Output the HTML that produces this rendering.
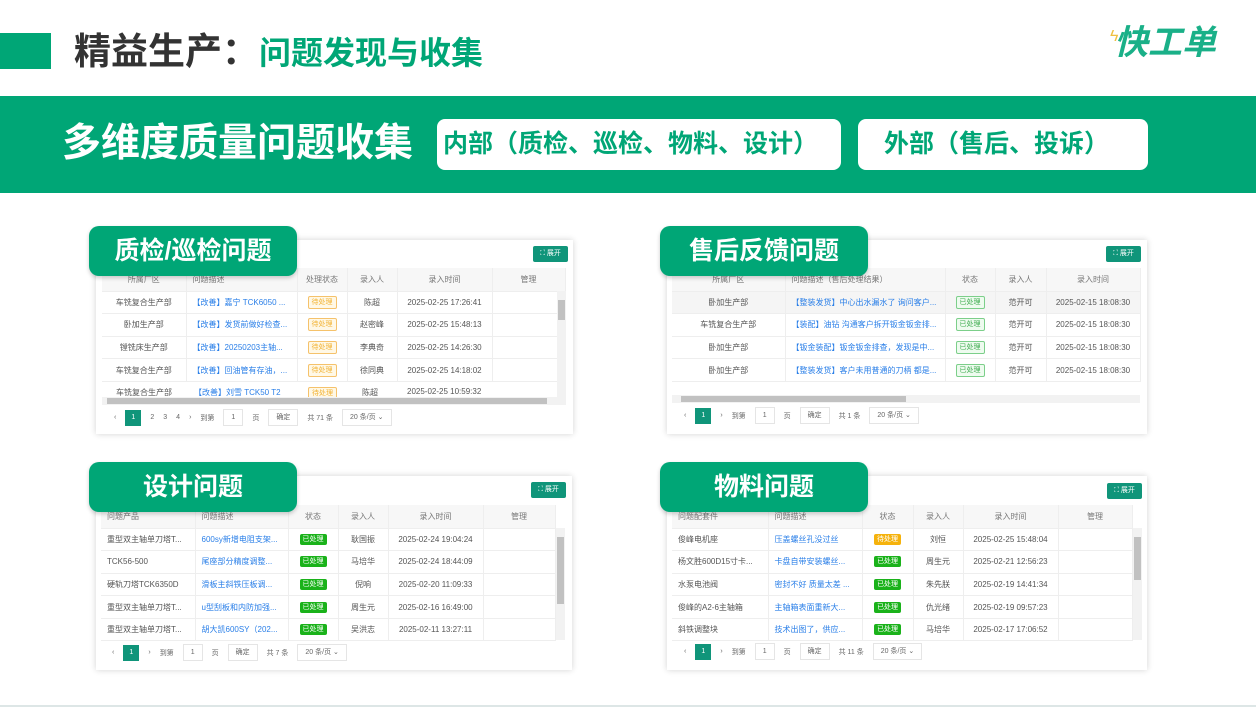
<!DOCTYPE html>
<html><head><meta charset="utf-8"><style>
*{margin:0;padding:0;box-sizing:border-box}
body{width:1256px;height:707px;overflow:hidden;background:#fff;font-family:"Liberation Sans","Noto Sans CJK SC",sans-serif;position:relative}
.abs{position:absolute}
.g{color:#00a676}
.band{left:0;top:96px;width:1256px;height:97px;background:#00a676}
.wb{background:#fff;border-radius:8px;top:119px;height:51px;color:#00a676;font-weight:bold;font-size:25px;line-height:51px;white-space:nowrap}
.card{background:#fff;box-shadow:0 0 6px rgba(0,0,0,.18)}
.tab{background:#00a676;color:#fff;border-radius:10px;font-weight:bold;font-size:25px;text-align:center;line-height:50px;height:50px;width:208px;box-shadow:0 2px 4px rgba(0,0,0,.2);z-index:3}
.exp{background:#10957a;color:#fff;font-size:7px;line-height:16px;height:16px;width:35px;text-align:center;border-radius:2px}
table{border-collapse:collapse;table-layout:fixed;font-size:8px;color:#555}
td,th{border-bottom:1px solid #eee;border-right:1px solid #eee;white-space:nowrap;overflow:hidden;text-overflow:ellipsis;text-align:center;font-weight:normal;padding:0 3px}
th{background:#f7f7f7;color:#777;height:23px}
td{height:22.6px}
.l{text-align:left;padding-left:6px}
.b{color:#2a7fe8}
.tg{display:inline-block;font-size:7px;line-height:11px;padding:0 3px;border-radius:2px}
.y{border:1px solid #f5c26b;background:#fff8e6;color:#f2b233}
.gr{background:#1ab21a;color:#fff}
.gl{border:1px solid #7ccf8a;background:#eefbef;color:#3cab4d}
.yf{background:#f5b20c;color:#fff}
.pg{font-size:7px;color:#666;display:flex;align-items:center;gap:9px;height:17px}
.pg .a{background:#10957a;color:#fff;width:16px;height:16px;line-height:16px;text-align:center}
.pg .bx{border:1px solid #e5e5e5;height:17px;line-height:15px;padding:0 7px}
.vs{background:#f2f2f2}
.vs i{position:absolute;background:#c1c1c1}
</style></head><body>
<div class="abs" style="left:0;top:33px;width:51px;height:36px;background:#00a676"></div>
<div class="abs" style="left:74px;top:29px;font-size:37px;font-weight:bold;color:#333;line-height:46px;white-space:nowrap">精益生产：<span class="g" style="font-size:32px">问题发现与收集</span></div>
<div class="abs" style="left:1114px;top:20px;font-size:34px;font-weight:bold;font-style:italic;color:#1ab088;line-height:46px">快工单</div>
<div class="abs" style="left:1110px;top:28px;color:#f0c040;font-size:16px">ϟ</div>
<div class="abs band"></div>
<div class="abs" style="left:62px;top:117px;font-size:39px;font-weight:bold;color:#fff;line-height:54px;white-space:nowrap">多维度质量问题收集</div>
<div class="abs wb" style="left:437px;width:404px;padding-left:6px">内部（质检、巡检、物料、设计）</div>
<div class="abs wb" style="left:858px;width:290px;padding-left:26px">外部（售后、投诉）</div>

<!-- card1 -->
<div class="abs card" style="left:96px;top:240px;width:477px;height:194px"></div>
<div class="abs tab" style="left:89px;top:226px">质检/巡检问题</div>
<div class="abs exp" style="left:533px;top:246px">⛶ 展开</div>
<table class="abs" style="left:102px;top:268px;width:463px">
<colgroup><col style="width:84px"><col style="width:111px"><col style="width:50px"><col style="width:50px"><col style="width:95px"><col style="width:73px"></colgroup>
<tr><th>所属厂区</th><th class="l">问题描述</th><th>处理状态</th><th>录入人</th><th>录入时间</th><th>管理</th></tr>
<tr><td>车铣复合生产部</td><td class="l b">【改善】嘉宁 TCK6050 ...</td><td><span class="tg y">待处理</span></td><td>陈超</td><td>2025-02-25 17:26:41</td><td></td></tr>
<tr><td>卧加生产部</td><td class="l b">【改善】发货前做好检查...</td><td><span class="tg y">待处理</span></td><td>赵密峰</td><td>2025-02-25 15:48:13</td><td></td></tr>
<tr><td>镗铣床生产部</td><td class="l b">【改善】20250203主轴...</td><td><span class="tg y">待处理</span></td><td>李典奇</td><td>2025-02-25 14:26:30</td><td></td></tr>
<tr><td>车铣复合生产部</td><td class="l b">【改善】回油管有存油，...</td><td><span class="tg y">待处理</span></td><td>徐同典</td><td>2025-02-25 14:18:02</td><td></td></tr>
</table>
<div class="abs" style="left:102px;top:382px;width:455px;height:15px;overflow:hidden;font-size:8px;color:#555"><span style="position:absolute;left:14px;top:5px">车铣复合生产部</span><span style="position:absolute;left:92px;top:5px;color:#2a7fe8">【改善】刘雪 TCK50 T2</span><span class="tg y" style="position:absolute;left:206px;top:5px">待处理</span><span style="position:absolute;left:260px;top:5px">陈超</span><span style="position:absolute;left:305px;top:5px">2025-02-25 10:59:32</span></div>
<div class="abs vs" style="left:557px;top:291px;width:9px;height:106px"><i style="left:1px;top:9px;width:7px;height:20px"></i></div>
<div class="abs vs" style="left:102px;top:397px;width:464px;height:8px"><i style="left:5px;top:1px;width:440px;height:6px"></i></div>
<div class="abs pg" style="left:114px;top:409px"><span>‹</span><span class="a">1</span><span>2</span><span>3</span><span>4</span><span>›</span><span>到第</span><span class="bx">1</span><span>页</span><span class="bx">确定</span><span>共 71 条</span><span class="bx">20 条/页 ⌄</span></div>

<!-- card2 -->
<div class="abs card" style="left:667px;top:240px;width:480px;height:194px"></div>
<div class="abs tab" style="left:660px;top:226px">售后反馈问题</div>
<div class="abs exp" style="left:1106px;top:246px">⛶ 展开</div>
<table class="abs" style="left:672px;top:268px;width:468px">
<colgroup><col style="width:113px"><col style="width:160px"><col style="width:50px"><col style="width:51px"><col style="width:94px"></colgroup>
<tr><th>所属厂区</th><th class="l">问题描述（售后处理结果）</th><th>状态</th><th>录入人</th><th>录入时间</th></tr>
<tr style="background:#f5f5f5"><td>卧加生产部</td><td class="l b">【整装发货】中心出水漏水了 询问客户...</td><td><span class="tg gl">已处理</span></td><td>范开可</td><td>2025-02-15 18:08:30</td></tr>
<tr><td>车铣复合生产部</td><td class="l b">【装配】油钻 沟通客户拆开钣金钣金排...</td><td><span class="tg gl">已处理</span></td><td>范开可</td><td>2025-02-15 18:08:30</td></tr>
<tr><td>卧加生产部</td><td class="l b">【钣金装配】钣金钣金排查，发现是中...</td><td><span class="tg gl">已处理</span></td><td>范开可</td><td>2025-02-15 18:08:30</td></tr>
<tr><td>卧加生产部</td><td class="l b">【整装发货】客户未用普通的刀柄 都是...</td><td><span class="tg gl">已处理</span></td><td>范开可</td><td>2025-02-15 18:08:30</td></tr>
</table>
<div class="abs vs" style="left:672px;top:395px;width:468px;height:8px"><i style="left:9px;top:1px;width:225px;height:6px"></i></div>
<div class="abs pg" style="left:684px;top:407px"><span>‹</span><span class="a">1</span><span>›</span><span>到第</span><span class="bx">1</span><span>页</span><span class="bx">确定</span><span>共 1 条</span><span class="bx">20 条/页 ⌄</span></div>

<!-- card3 -->
<div class="abs card" style="left:96px;top:476px;width:476px;height:194px"></div>
<div class="abs tab" style="left:89px;top:462px">设计问题</div>
<div class="abs exp" style="left:531px;top:482px">⛶ 展开</div>
<table class="abs" style="left:101px;top:505px;width:454px">
<colgroup><col style="width:94px"><col style="width:93px"><col style="width:50px"><col style="width:50px"><col style="width:95px"><col style="width:72px"></colgroup>
<tr><th class="l">问题产品</th><th class="l">问题描述</th><th>状态</th><th>录入人</th><th>录入时间</th><th>管理</th></tr>
<tr><td class="l">重型双主轴单刀塔T...</td><td class="l b">600sy新增电阻支架...</td><td><span class="tg gr">已处理</span></td><td>耿国振</td><td>2025-02-24 19:04:24</td><td></td></tr>
<tr><td class="l">TCK56-500</td><td class="l b">尾座部分精度调整...</td><td><span class="tg gr">已处理</span></td><td>马培华</td><td>2025-02-24 18:44:09</td><td></td></tr>
<tr><td class="l">硬轨刀塔TCK6350D</td><td class="l b">滑板主斜铁压板调...</td><td><span class="tg gr">已处理</span></td><td>倪响</td><td>2025-02-20 11:09:33</td><td></td></tr>
<tr><td class="l">重型双主轴单刀塔T...</td><td class="l b">u型刮板和内防加强...</td><td><span class="tg gr">已处理</span></td><td>周生元</td><td>2025-02-16 16:49:00</td><td></td></tr>
<tr><td class="l">重型双主轴单刀塔T...</td><td class="l b">胡大凯600SY（202...</td><td><span class="tg gr">已处理</span></td><td>吴洪志</td><td>2025-02-11 13:27:11</td><td></td></tr>
</table>
<div class="abs vs" style="left:556px;top:528px;width:9px;height:112px"><i style="left:1px;top:9px;width:7px;height:67px"></i></div>
<div class="abs pg" style="left:112px;top:644px"><span>‹</span><span class="a">1</span><span>›</span><span>到第</span><span class="bx">1</span><span>页</span><span class="bx">确定</span><span>共 7 条</span><span class="bx">20 条/页 ⌄</span></div>

<!-- card4 -->
<div class="abs card" style="left:667px;top:476px;width:480px;height:194px"></div>
<div class="abs tab" style="left:660px;top:462px">物料问题</div>
<div class="abs exp" style="left:1107px;top:483px">⛶ 展开</div>
<table class="abs" style="left:672px;top:505px;width:460px">
<colgroup><col style="width:96px"><col style="width:94px"><col style="width:51px"><col style="width:50px"><col style="width:95px"><col style="width:74px"></colgroup>
<tr><th class="l">问题配套件</th><th class="l">问题描述</th><th>状态</th><th>录入人</th><th>录入时间</th><th>管理</th></tr>
<tr><td class="l">俊峰电机座</td><td class="l b">压盖螺丝孔没过丝</td><td><span class="tg yf">待处理</span></td><td>刘恒</td><td>2025-02-25 15:48:04</td><td></td></tr>
<tr><td class="l">杨文胜600D15寸卡...</td><td class="l b">卡盘自带安装螺丝...</td><td><span class="tg gr">已处理</span></td><td>周生元</td><td>2025-02-21 12:56:23</td><td></td></tr>
<tr><td class="l">水泵电池阀</td><td class="l b">密封不好 质量太差 ...</td><td><span class="tg gr">已处理</span></td><td>朱先朕</td><td>2025-02-19 14:41:34</td><td></td></tr>
<tr><td class="l">俊峰的A2-6主轴箱</td><td class="l b">主轴箱表面重新大...</td><td><span class="tg gr">已处理</span></td><td>仇光绪</td><td>2025-02-19 09:57:23</td><td></td></tr>
<tr><td class="l">斜铁调整块</td><td class="l b">技术出图了，供应...</td><td><span class="tg gr">已处理</span></td><td>马培华</td><td>2025-02-17 17:06:52</td><td></td></tr>
</table>
<div class="abs vs" style="left:1133px;top:528px;width:9px;height:112px"><i style="left:1px;top:9px;width:7px;height:43px"></i></div>
<div class="abs pg" style="left:684px;top:643px"><span>‹</span><span class="a">1</span><span>›</span><span>到第</span><span class="bx">1</span><span>页</span><span class="bx">确定</span><span>共 11 条</span><span class="bx">20 条/页 ⌄</span></div>

<div class="abs" style="left:0;top:705px;width:1256px;height:2px;background:#dde6e6"></div>
</body></html>
